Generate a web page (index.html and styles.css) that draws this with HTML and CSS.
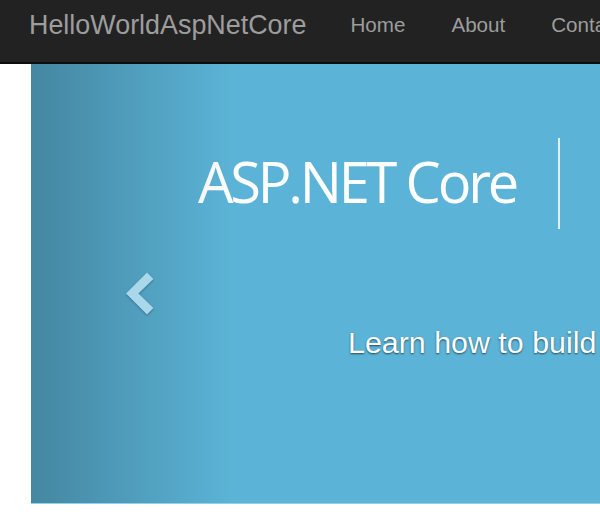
FILE: index.html
```html
<!DOCTYPE html>
<html lang="en">
<head>
<meta charset="utf-8">
<title>HelloWorldAspNetCore</title>
<link rel="stylesheet" href="styles.css">
</head>
<body>
<header class="navbar">
  <a class="brand" href="#">HelloWorldAspNetCore</a>
  <ul class="nav">
    <li><a href="#">Home</a></li>
    <li><a href="#">About</a></li>
    <li><a href="#">Contact</a></li>
  </ul>
</header>
<main class="page">
  <section class="carousel">
    <div class="banner">
      <h1 class="banner-title">ASP.NET Core</h1>
      <span class="banner-divider"></span>
    </div>
    <a class="control-left" href="#" aria-label="Previous">
      <svg class="chevron" width="28" height="45" viewBox="0 0 28 45" aria-hidden="true">
        <polygon points="0,22.5 21,1.5 27.4,7.9 12.4,22.5 27.4,37.1 21,43.5"/>
      </svg>
    </a>
    <div class="caption">
      <p>Learn how to build ASP.NET apps that can run anywhere.</p>
    </div>
  </section>
</main>
</body>
</html>
```

FILE: styles.css
```css
html, body {
  margin: 0;
  padding: 0;
  overflow: hidden;
  background: #ffffff;
}

body {
  font-family: "Liberation Sans", Arial, Helvetica, sans-serif;
}

.navbar {
  display: flex;
  align-items: flex-start;
  height: 62px;
  background: #222222;
  border-bottom: 2px solid #0d0d0d;
  white-space: nowrap;
}

.brand {
  display: block;
  margin-left: 29px;
  padding-top: 12px;
  font-size: 26.9px;
  line-height: 1;
  color: #9d9d9d;
  text-decoration: none;
}

.nav {
  display: flex;
  gap: 46px;
  list-style: none;
  margin: 0 0 0 44px;
  padding: 15px 0 0 0;
}

.nav a {
  display: block;
  font-size: 20.6px;
  line-height: 1;
  color: #9d9d9d;
  text-decoration: none;
}

.page {
  padding-left: 31px;
}

.carousel {
  position: relative;
  width: 1360px;
  height: 439px;
  background: #5bb4d7;
  border-bottom: 1px solid #93d1e8;
  overflow: hidden;
}

.banner {
  display: flex;
  align-items: flex-start;
  padding: 74px 0 0 167px;
}

.banner-title {
  width: 360px;
  margin: 15px 0 0 0;
  font-family: "Open Sans", "Noto Sans", sans-serif;
  font-weight: 400;
  font-size: 56px;
  line-height: 1;
  letter-spacing: -3.2px;
  color: #ffffff;
  white-space: nowrap;
}

.banner-divider {
  display: block;
  width: 2px;
  height: 91px;
  background: rgba(255, 255, 255, 0.8);
}

.control-left {
  position: absolute;
  left: 0;
  top: 0;
  bottom: 0;
  width: 204px;
  background: linear-gradient(to right, rgba(0, 0, 0, 0.25), rgba(0, 0, 0, 0));
}

.chevron {
  position: absolute;
  left: 95px;
  top: 207px;
  fill: #a9d8eb;
  filter: drop-shadow(0 1px 1px rgba(0, 0, 0, 0.3));
}

.caption {
  position: absolute;
  left: 317px;
  top: 263px;
}

.caption p {
  margin: 0;
  font-size: 30.4px;
  line-height: 1;
  color: #ffffff;
  white-space: nowrap;
  text-shadow: 0 1px 2px rgba(0, 0, 0, 0.6);
}
```
